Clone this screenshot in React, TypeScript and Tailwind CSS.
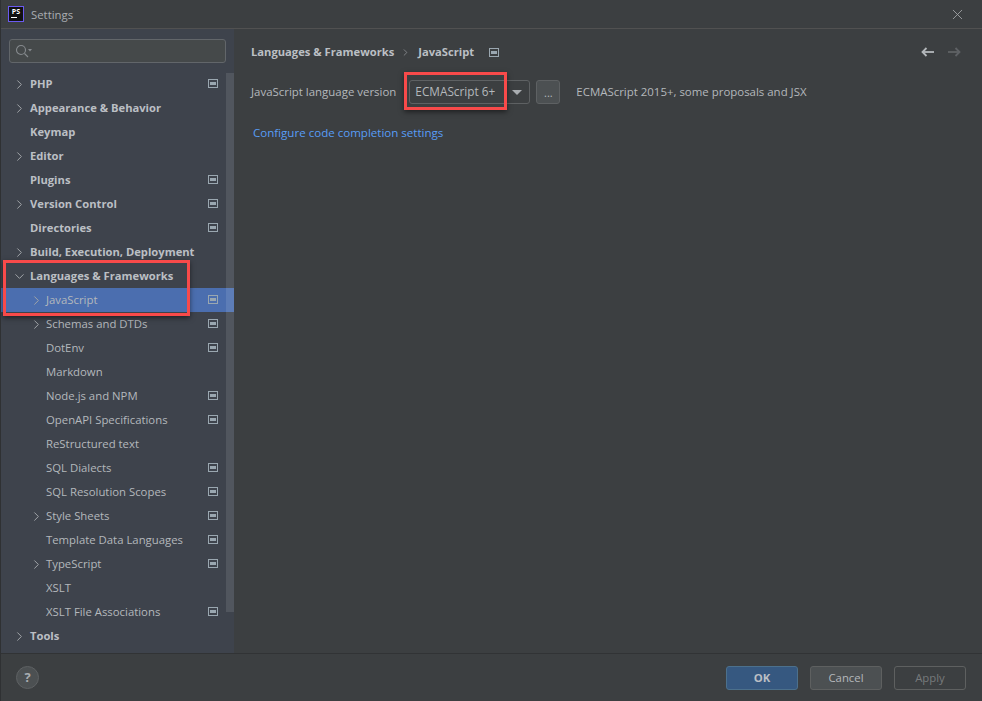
import { ChevronRight, ChevronDown, X } from 'lucide-react';

const font = "font-['Open_Sans','Noto_Sans',sans-serif]";

const PageIcon = ({ className = '' }: { className?: string }) => (
  <svg width="10" height="9" viewBox="0 0 10 9" className={className}>
    <rect x="0.5" y="0.5" width="9" height="8" fill="none" stroke="#9aa7b0" />
    <rect x="2" y="3" width="6" height="3" fill="#9aa7b0" />
  </svg>
);

const NavArrow = ({ flip, color, className = '' }: { flip?: boolean; color: string; className?: string }) => (
  <svg width="13" height="10" viewBox="0 0 13 10" fill="none" stroke={color} strokeWidth="1.8" className={`${flip ? 'rotate-180' : ''} ${className}`}>
    <path d="M13 5 H1.5" />
    <path d="M5.5 1 L1.5 5 L5.5 9" />
  </svg>
);

const items = [
  { label: 'PHP', bold: true, arrow: 'right', page: true },
  { label: 'Appearance & Behavior', bold: true, arrow: 'right' },
  { label: 'Keymap', bold: true },
  { label: 'Editor', bold: true, arrow: 'right' },
  { label: 'Plugins', bold: true, page: true },
  { label: 'Version Control', bold: true, arrow: 'right', page: true },
  { label: 'Directories', bold: true, page: true },
  { label: 'Build, Execution, Deployment', bold: true, arrow: 'right' },
  { label: 'Languages & Frameworks', bold: true, arrow: 'down' },
  { label: 'JavaScript', sub: true, arrow: 'right', page: true, selected: true },
  { label: 'Schemas and DTDs', sub: true, arrow: 'right', page: true },
  { label: 'DotEnv', sub: true, page: true },
  { label: 'Markdown', sub: true },
  { label: 'Node.js and NPM', sub: true, page: true },
  { label: 'OpenAPI Specifications', sub: true, page: true },
  { label: 'ReStructured text', sub: true },
  { label: 'SQL Dialects', sub: true, page: true },
  { label: 'SQL Resolution Scopes', sub: true, page: true },
  { label: 'Style Sheets', sub: true, arrow: 'right', page: true },
  { label: 'Template Data Languages', sub: true, page: true },
  { label: 'TypeScript', sub: true, arrow: 'right', page: true },
  { label: 'XSLT', sub: true },
  { label: 'XSLT File Associations', sub: true, page: true },
  { label: 'Tools', bold: true, arrow: 'right' },
];

const Row = ({ label, bold, sub, arrow, page, selected }: any) => (
  <div className={`h-6 flex items-center relative ${selected ? 'bg-[#4b6eaf]' : ''}`}>
    <div className={`w-[15px] flex justify-center shrink-0 ${sub ? 'ml-[28px] mr-[2px]' : 'ml-[11px] mr-[3px]'}`}>
      {arrow === 'right' && <ChevronRight size={15} strokeWidth={1.6} className="text-[#a0a4a8]" />}
      {arrow === 'down' && <ChevronDown size={15} strokeWidth={1.6} className="text-[#a0a4a8]" />}
    </div>
    <span className={bold ? 'text-[11.2px] font-bold text-[#bbbfc4]' : 'text-[11.35px] text-[#b4b8bc]'}>{label}</span>
    {page && <PageIcon className="absolute left-[207px] top-[7px]" />}
  </div>
);

export default function App() {
  return (
    <div className={`w-[982px] h-[701px] bg-[#3c3f41] flex flex-col overflow-hidden relative border-l border-[#2f3133] ${font}`}>
      {/* title bar */}
      <div className="h-[29px] shrink-0 flex items-center border-b border-[#515151]">
        <div className="ml-[7px] w-4 h-4 bg-[#111] border border-[#6a5af0] flex flex-col items-center pt-[1px]">
          <span className="text-[7px] leading-[8px] font-bold text-white">PS</span>
          <span className="w-[6px] h-[1px] bg-white self-start ml-[2px] mt-[1px]" />
        </div>
        <span className="ml-[7px] mt-[2px] text-[11.35px] text-[#a9adb1]">Settings</span>
        <X size={17} strokeWidth={1.2} className="ml-auto mr-[16px] text-[#a5a8aa]" />
      </div>

      <div className="flex-1 flex min-h-0">
        {/* sidebar */}
        <div className="w-[233px] shrink-0 bg-[#3e434c] flex flex-col relative">
          <div className="mt-[10px] ml-[8px] w-[217px] h-6 rounded-[3px] border border-[#62666a] bg-[#45494a] flex items-center pl-[5px] shrink-0">
            <svg width="18" height="14" viewBox="0 0 18 14" fill="none" stroke="#868a8e" strokeWidth="1.1">
              <circle cx="6" cy="6" r="4.5" />
              <path d="M9.5 9.5 L13 13" />
              <path d="M13 5 h4 l-2 2.5z" fill="#868a8e" stroke="none" />
            </svg>
          </div>
          <div className="mt-[9px]">
            {items.map((item) => (
              <Row key={item.label} {...item} />
            ))}
          </div>
          {/* scrollbar */}
          <div className="absolute right-0 top-[44px] w-[8px] h-[539px] bg-white/10" />
        </div>

        {/* content */}
        <div className="flex-1 min-w-0 pl-[17px] pr-[21px]">
          <div className="h-[46px] flex items-center text-[11.2px] font-bold text-[#bbbfc4]">
            <span>Languages &amp; Frameworks</span>
            <ChevronRight size={11} strokeWidth={1.5} className="ml-[6px] mr-[7px] text-[#9a9ea2]" />
            <span>JavaScript</span>
            <PageIcon className="ml-[15px]" />
            <NavArrow color="#b4b8bb" className="ml-auto" />
            <NavArrow flip color="#5f6265" className="ml-[14px]" />
          </div>
          <div className="flex items-center text-[11.45px] text-[#b4b8bc] h-6 mt-[5px]">
            <span>JavaScript language version</span>
            <div className="ml-[13px] w-[121px] h-6 rounded-[3px] border border-[#5e6163] flex items-center bg-[#3c3f41]">
              <span className="pl-[5px] flex-1 text-[11.8px]">ECMAScript 6+</span>
              <div className="w-[25px] h-full border-l border-[#5e6163] flex items-center justify-center">
                <span className="w-0 h-0 border-l-[5px] border-r-[5px] border-t-[5px] border-l-transparent border-r-transparent border-t-[#a9adb1]" />
              </div>
            </div>
            <div className="ml-[6px] w-6 h-6 rounded-[3px] border border-[#5e6163] bg-[#4c5052] flex items-center justify-center pt-[3px] text-[11px]">...</div>
            <span className="ml-[16px]">ECMAScript 2015+, some proposals and JSX</span>
          </div>
          <div className="mt-[20px] ml-[2px] text-[11.55px] text-[#589df6]">Configure code completion settings</div>
        </div>
      </div>

      {/* footer */}
      <div className="h-[48px] shrink-0 border-t border-[#313335] flex items-center pl-[15px] pr-[16px] text-[11.35px]">
        <div className="w-[23px] h-[23px] rounded-full bg-[#4c5052] border border-[#5e6163] flex items-center justify-center font-bold text-[13px] text-[#a9adb1]">?</div>
        <div className="ml-auto flex gap-[12px]">
          <div className="w-[72px] h-6 rounded-[3px] bg-[#365880] border border-[#4c708c] flex items-center justify-center font-bold text-[#bbbfc4]">OK</div>
          <div className="w-[72px] h-6 rounded-[3px] bg-[#4c5052] border border-[#5e6060] flex items-center justify-center text-[#b4b8bc]">Cancel</div>
          <div className="w-[72px] h-6 rounded-[3px] border border-[#5e6060] flex items-center justify-center text-[#777a7c]">Apply</div>
        </div>
      </div>

      {/* red annotations */}
      <div className="absolute left-[2px] top-[260px] w-[187px] h-[56px] border-[3px] border-[#f84a4a] shadow-[0_2px_5px_rgba(0,0,0,0.5)]" />
      <div className="absolute left-[403px] top-[72px] w-[103px] h-[38px] border-[3px] border-[#f84a4a] shadow-[0_2px_5px_rgba(0,0,0,0.5)]" />
    </div>
  );
}
